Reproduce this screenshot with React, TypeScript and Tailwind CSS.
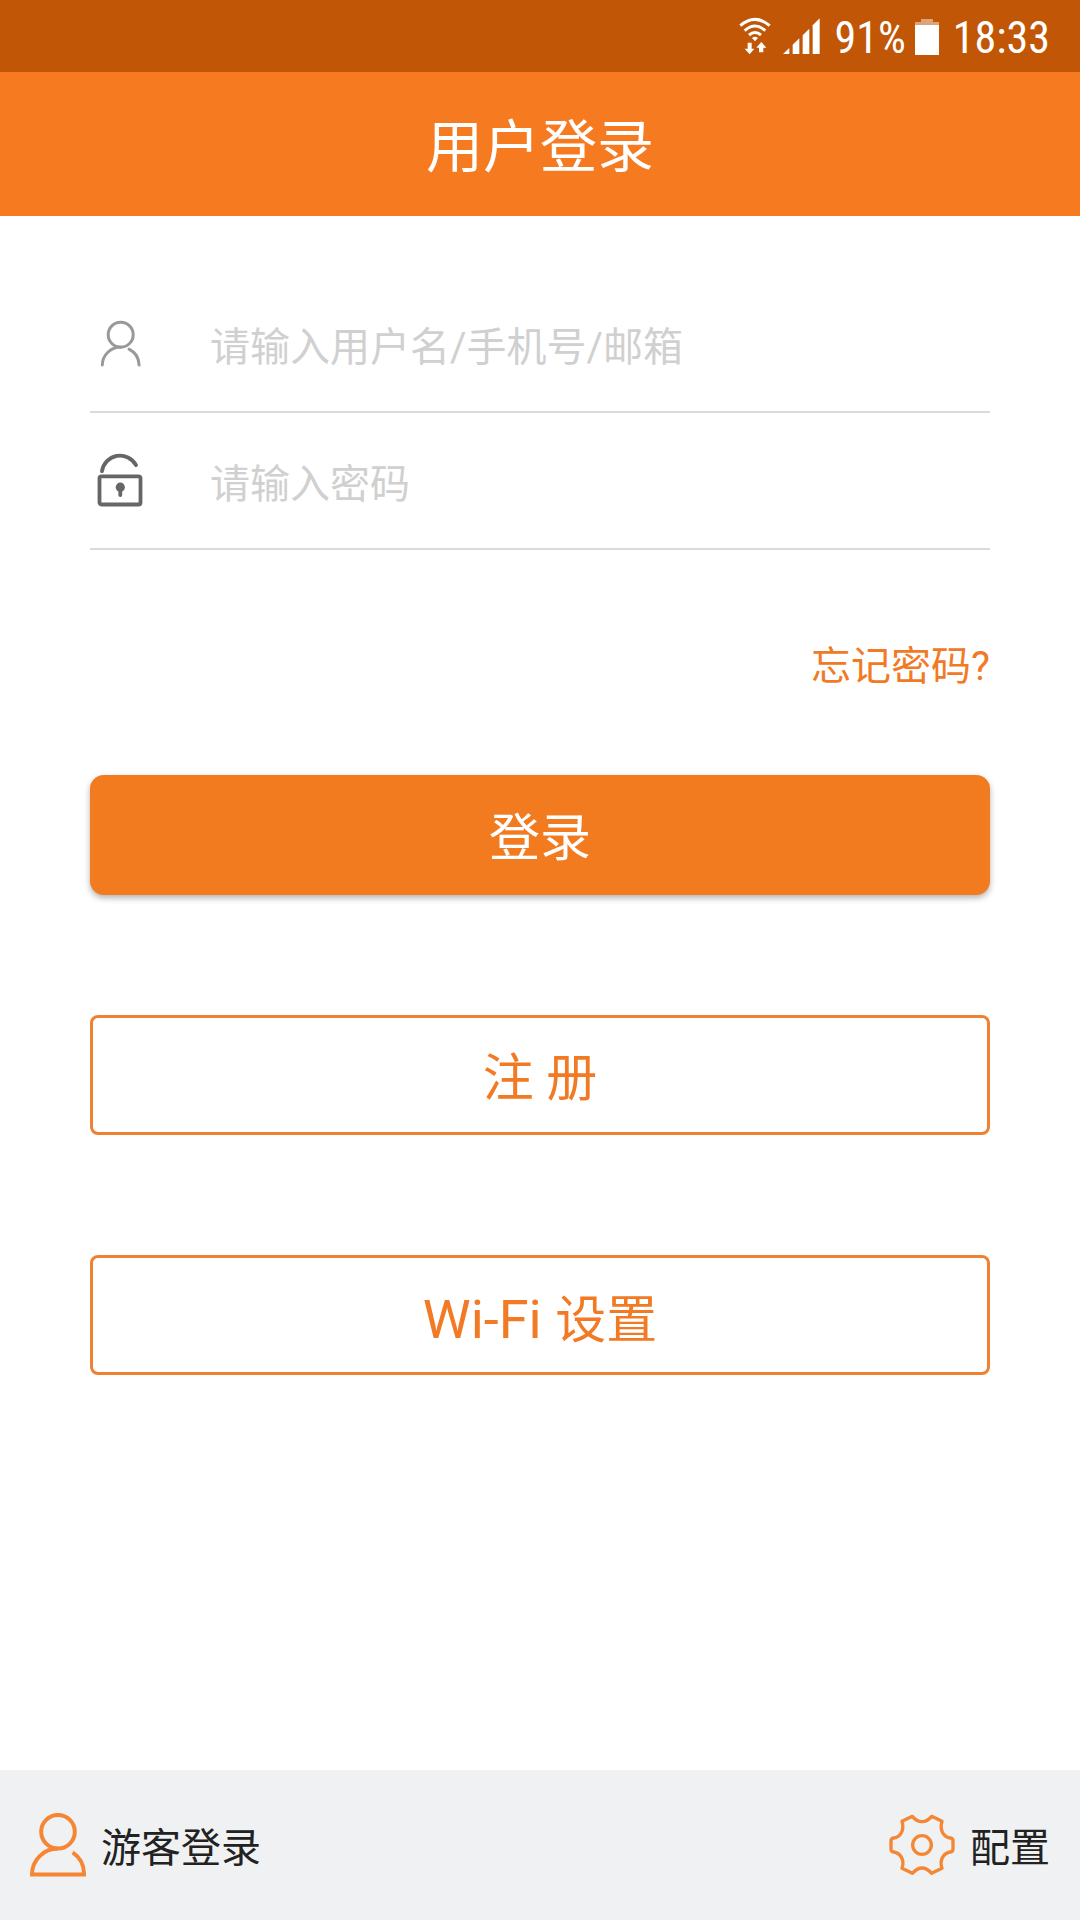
import type { ReactNode } from "react";

function StatusBar() {
  return (
    <div className="flex h-[72px] items-center justify-end bg-[#c15606] pr-[30px] font-['Roboto_Condensed','Liberation_Sans_Narrow',Roboto,sans-serif] text-[44px] leading-none text-white">
      <svg className="mr-[12px] h-[38px] w-[32px]" viewBox="0 0 96 114" fill="none" stroke="#fff" strokeWidth="9" aria-label="Wi-Fi">
        <path d="M4 26Q48-12 92 26" />
        <path d="M17 41Q48 13 79 41" />
        <path d="M30 54Q48 39 66 54" />
        <path d="M39 63Q48 56 57 63L48 73Z" fill="#fff" stroke="none" />
        <path d="M26 77H38V95H46L32 112L17 95H26Z" fill="#fff" stroke="none" />
        <path d="M60 106H73V92H82L67 75L52 92H60Z" fill="#fff" stroke="none" />
      </svg>
      <svg className="mr-[15px] h-[36px] w-[37px]" viewBox="0 0 111 108" fill="#fff" aria-label="信号">
        <path d="M0 108L19 90V108Z" />
        <path d="M29 80L49 61V108H29Z" />
        <path d="M59 52L79 32V108H59Z" />
        <path d="M89 22L110 1V108H89Z" />
      </svg>
      <span className="pt-1">91%</span>
      <svg className="mr-[14px] ml-[9px] h-[37px] w-[24px]" viewBox="0 0 24 37" fill="#fff" aria-label="电量">
        <path d="M6 1H18V4H24V7H0V4H6Z" fillOpacity=".45" />
        <path d="M0 7H24V37H0Z" />
      </svg>
      <span className="pt-1">18:33</span>
    </div>
  );
}

function UserIcon() {
  return (
    <svg className="h-[48px] w-[48px]" viewBox="0 0 48 48" fill="none" stroke="#999" strokeWidth="3" strokeLinecap="round" aria-hidden="true">
      <circle cx="24.7" cy="14.7" r="12.5" />
      <path d="M6.3 45A18.4 18.4 0 0 1 24.7 27" />
      <path d="M33 29.2A18.4 18.4 0 0 1 43.1 45" />
    </svg>
  );
}

function LockIcon() {
  return (
    <svg className="h-[56px] w-[48px]" viewBox="0 0 48 56" fill="none" stroke="#666" strokeWidth="3.8" strokeLinecap="round" aria-hidden="true">
      <rect x="3.5" y="23.3" width="41" height="28.2" rx="2" />
      <path d="M6 18.2A18.2 18.2 0 0 1 40 12.2" />
      <circle cx="24.3" cy="34.2" r="4.6" fill="#666" stroke="none" />
      <path d="M24.3 35V42" />
    </svg>
  );
}

function GuestIcon() {
  return (
    <svg className="h-[64px] w-[56px]" viewBox="0 0 56 64" fill="none" stroke="#f58634" strokeWidth="4" aria-hidden="true">
      <circle cx="28" cy="18.8" r="16.8" />
      <path d="M28 35.6A26 26 0 0 0 2 61.4H54A26 26 0 0 0 42.6 39.4" />
    </svg>
  );
}

function GearIcon() {
  return (
    <svg className="h-[64px] w-[66px]" viewBox="88 190 198 192" fill="none" stroke="#f58634" strokeWidth="10" strokeLinejoin="round" aria-hidden="true">
      <path d="M127 215L158 200C168 212 175 216 187 216C199 216 206 212 216 200L247 215C239 242 252 263 272 265Q280 266 280 274V298Q280 306 272 307C252 310 238 331 247 356L216 371C206 360 199 355 187 355C175 355 168 360 158 371L127 356C136 331 122 310 102 307Q94 306 94 298V274Q94 266 102 265C122 263 135 242 127 215Z" />
      <circle cx="187" cy="286" r="28" />
    </svg>
  );
}

type FieldProps = { id: string; label: string; type: string; icon: ReactNode };

function Field({ id, label, type, icon }: FieldProps) {
  return (
    <div className="flex h-[137px] items-center border-b-2 border-[#dadada] pl-[6px]">
      <label htmlFor={id} aria-label={label} className="shrink-0">
        {icon}
      </label>
      <input
        id={id}
        type={type}
        placeholder={label}
        className="ml-[66px] h-[80px] min-w-0 flex-1 bg-transparent pt-2 text-[40px] text-[#333] outline-none placeholder:text-[#d0d0d0]"
      />
    </div>
  );
}

export default function App() {
  return (
    <div className="flex min-h-screen flex-col bg-white font-[Roboto,'Noto_Sans_CJK_SC',sans-serif]">
      <StatusBar />
      <header className="flex h-[144px] items-center justify-center bg-[#f57a20] pt-2">
        <h1 className="text-[57px] text-white">用户登录</h1>
      </header>
      <main className="flex-1 px-[90px] pt-[60px]">
        <form className="flex flex-col" onSubmit={(e) => e.preventDefault()}>
          <Field id="account" type="text" label="请输入用户名/手机号/邮箱" icon={<UserIcon />} />
          <Field id="password" type="password" label="请输入密码" icon={<LockIcon />} />
          <a href="#forgot" className="mt-[88px] mb-[80px] self-end text-[40px] leading-[57px] text-[#f07a25]">
            忘记密码?
          </a>
          <div className="flex flex-col gap-[120px] text-[51px]">
            <button type="submit" className="h-[120px] rounded-[14px] bg-[#f27a1f] pt-2 text-white shadow-[0_3px_6px_rgba(0,0,0,0.3)]">
              登录
            </button>
            <button type="button" className="h-[120px] rounded-[8px] border-3 border-[#ef8232] pt-2 text-[#f27a24]">
              注 册
            </button>
            <button type="button" className="h-[120px] rounded-[8px] border-3 border-[#ef8232] pt-2 text-[#f27a24]">
              <span className="text-[54px]">Wi-Fi </span>设置
            </button>
          </div>
        </form>
      </main>
      <footer className="flex h-[150px] items-center justify-between bg-[#f0f1f3] px-[30px] text-[40px] text-[#222]">
        <button type="button" className="flex items-center gap-[15px]">
          <GuestIcon />
          <span className="pt-2">游客登录</span>
        </button>
        <button type="button" className="flex items-center gap-[15px]">
          <GearIcon />
          <span className="pt-2">配置</span>
        </button>
      </footer>
    </div>
  );
}
